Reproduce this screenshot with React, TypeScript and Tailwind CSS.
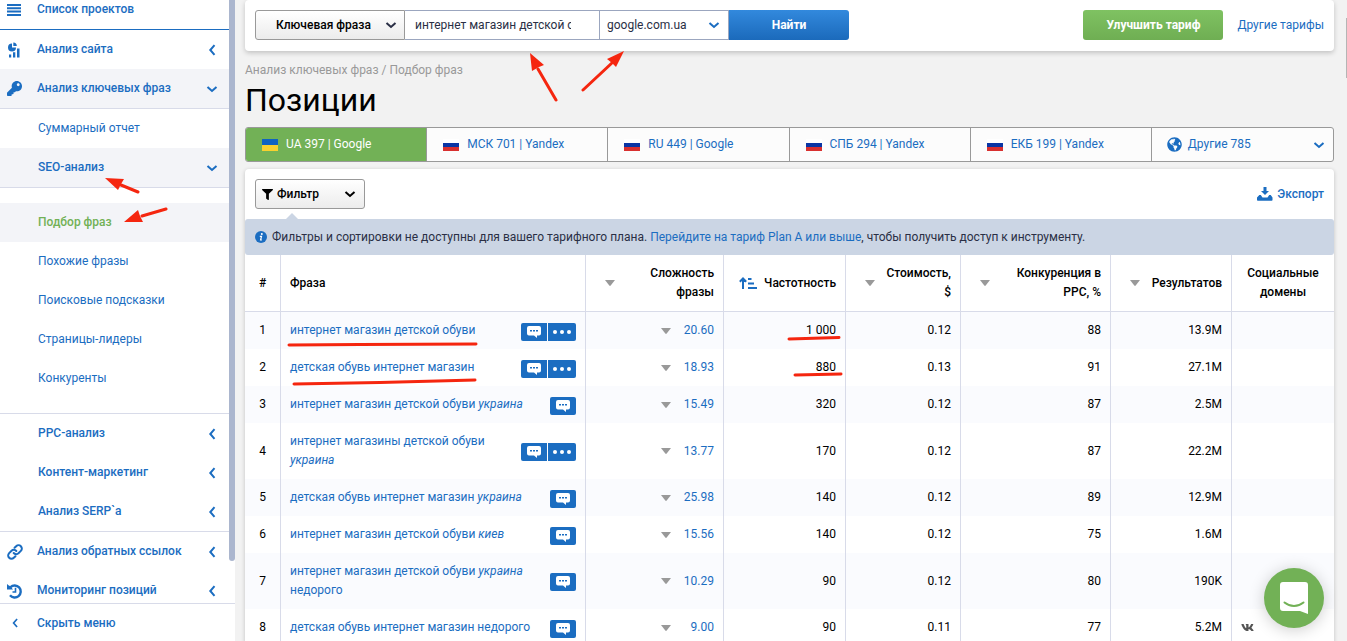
import { useState } from 'react';
import type { ReactNode } from 'react';
import clsx from 'clsx';
import { FaFilter, FaGlobeAmericas, FaKey, FaVk } from 'react-icons/fa';

type Row = {
  id: number;
  phrase: string;
  extra?: string;
  tail?: string;
  menu?: boolean;
  difficulty: string;
  volume: string;
  cost: string;
  ppc: string;
  results: string;
  vk?: boolean;
};

const rows: Row[] = [
  { id: 1, phrase: 'интернет магазин детской обуви', menu: true, difficulty: '20.60', volume: '1 000', cost: '0.12', ppc: '88', results: '13.9M' },
  { id: 2, phrase: 'детская обувь интернет магазин', menu: true, difficulty: '18.93', volume: '880', cost: '0.13', ppc: '91', results: '27.1M' },
  { id: 3, phrase: 'интернет магазин детской обуви', extra: 'украина', difficulty: '15.49', volume: '320', cost: '0.12', ppc: '87', results: '2.5M' },
  { id: 4, phrase: 'интернет магазины детской обуви', extra: 'украина', menu: true, difficulty: '13.77', volume: '170', cost: '0.12', ppc: '87', results: '22.2M' },
  { id: 5, phrase: 'детская обувь интернет магазин', extra: 'украина', difficulty: '25.98', volume: '140', cost: '0.12', ppc: '89', results: '12.9M' },
  { id: 6, phrase: 'интернет магазин детской обуви', extra: 'киев', difficulty: '15.56', volume: '140', cost: '0.12', ppc: '75', results: '1.6M' },
  { id: 7, phrase: 'интернет магазин детской обуви', extra: 'украина', tail: 'недорого', difficulty: '10.29', volume: '90', cost: '0.12', ppc: '80', results: '190K' },
  { id: 8, phrase: 'детская обувь интернет магазин недорого', difficulty: '9.00', volume: '90', cost: '0.11', ppc: '77', results: '5.2M', vk: true },
];

const tabs = [
  { label: 'UA 397 | Google', flag: 'ua' },
  { label: 'МСК 701 | Yandex', flag: 'ru' },
  { label: 'RU 449 | Google', flag: 'ru' },
  { label: 'СПБ 294 | Yandex', flag: 'ru' },
  { label: 'ЕКБ 199 | Yandex', flag: 'ru' },
];

const Chevron = ({ dir = 'down', className }: { dir?: 'down' | 'left'; className?: string }) => (
  <svg className={clsx('shrink-0', className)} width="12" height="12" viewBox="0 0 12 12" fill="none" stroke="currentColor" strokeWidth="2">
    <path d={dir === 'down' ? 'M1.500 4L6 8l4.500-4' : 'M8.500 1.200L4.300 6l4.200 4.800'} />
  </svg>
);

const Caret = () => (
  <svg className="shrink-0 text-[#999]" width="10" height="6" viewBox="0 0 10 6" fill="currentColor">
    <path d="M0 0h10L5.700 5.600a1 1 0 0 1-1.400 0z" />
  </svg>
);

const MenuIcon = () => (
  <svg width="14" height="12" viewBox="0 0 14 12" fill="currentColor">
    <path d="M0 0h14v2H0zM0 3.300h14v2H0zM0 6.600h14v2H0zM0 10h14v2H0z" />
  </svg>
);

const SiteIcon = () => (
  <svg width="14" height="16" viewBox="0 0 14 16" fill="currentColor">
    <path d="M5 1.400v4h4A4 4 0 1 1 5 1.400z" />
    <path d="M6.300 0.400A3.600 3.600 0 0 1 9.800 4H6.300z" />
    <path d="M2 12.500h2.200V15.500H2zM6 10.200h2.300v5.300H6zM10 6.500h2.500v9H10z" />
  </svg>
);

const LinkIcon = () => (
  <svg width="16" height="16" viewBox="0 0 24 24" fill="none" stroke="currentColor" strokeWidth="3" strokeLinecap="round">
    <path d="M10 13.500a5 5 0 0 0 7.200.4l3.600-3.600a4.900 4.900 0 0 0-7-7L11.300 5.700" />
    <path d="M14 10.500a5 5 0 0 0-7.200-.4l-3.600 3.600a4.900 4.900 0 0 0 7 7l2.500-2.400" />
  </svg>
);

const HistoryIcon = () => (
  <svg width="16" height="16" viewBox="0 0 16 16" fill="none" stroke="currentColor" strokeWidth="2.400">
    <path d="M3.500 4.200A6 6 0 1 1 3 12.200" />
    <path strokeWidth="1.600" d="M8.500 4.800V9H5.500" />
    <path fill="currentColor" stroke="none" d="M0 1l1.800 1.500L3.500 3.200 6 6.500H0z" />
  </svg>
);

const InfoIcon = () => (
  <svg className="shrink-0 text-[#1b6dc1]" width="12" height="12" viewBox="0 0 12 12">
    <circle cx="6" cy="6" r="6" fill="currentColor" />
    <circle cx="6.800" cy="3" r="1" fill="#fff" />
    <path d="M4.800 5.400h1.700L5.600 9h1.300" fill="none" stroke="#fff" strokeWidth="1.200" />
  </svg>
);

const DownloadIcon = () => (
  <svg width="16" height="14" viewBox="0 0 16 14" fill="currentColor">
    <path d="M6.500 0h3v4H12L8 8 4 4h2.500z" />
    <path d="M2.300 8h1.500l1.700 2.500h5L12.200 8h1.500L15.500 10.500V13a.8.8 0 0 1-.8.8H.8A.8.8 0 0 1 0 13v-2.500z" />
  </svg>
);

const SortIcon = () => (
  <svg className="shrink-0 text-[#1b6dc1]" width="18" height="12" viewBox="0 0 18 12" fill="none" stroke="currentColor" strokeWidth="2">
    <path d="M4 12V1.500M0.800 4.800L4 1.500l3.200 3.300M9 2h3.500M9 6.500h6M9 11h9" />
  </svg>
);

const ChatIcon = () => (
  <svg width="14" height="12" viewBox="0 0 14 12">
    <path fill="#fff" d="M2 0h10a2 2 0 0 1 2 2v5.500a2 2 0 0 1-2 2h-2V12L7 9.500H2a2 2 0 0 1-2-2V2a2 2 0 0 1 2-2z" />
    <path fill="#1b6dc1" d="M3 4h2v1.600H3zM6 4h2v1.600H6zM9 4h2v1.600H9z" />
  </svg>
);

const Flag = ({ code }: { code: string }) =>
  code === 'ua' ? (
    <svg width="16" height="12" viewBox="0 0 16 12">
      <rect width="16" height="12" fill="#0f63c0" />
      <rect y="6" width="16" height="6" fill="#f8d12e" />
    </svg>
  ) : (
    <svg width="16" height="12" viewBox="0 0 16 12">
      <rect width="16" height="12" fill="#fff" />
      <rect y="4" width="16" height="4" fill="#0a35a4" />
      <rect y="8" width="16" height="4" fill="#d8302f" />
    </svg>
  );

const NavItem = ({
  label,
  icon,
  arrow,
  bold,
  active,
  shaded,
}: {
  label: string;
  icon?: ReactNode;
  arrow?: 'down' | 'left';
  bold?: boolean;
  active?: boolean;
  shaded?: boolean;
}) => (
  <a
    href="#"
    className={clsx(
      'flex h-[39px] shrink-0 items-center pr-[11px]',
      bold && 'font-medium',
      active && 'text-[#72b156]',
      shaded && 'bg-[#f3f4f8]',
      icon ? 'pl-[7px]' : 'pl-[38px]'
    )}
  >
    {icon && <span className="flex w-[30px] shrink-0">{icon}</span>}
    <span className="flex-1">{label}</span>
    {arrow && <Chevron dir={arrow} />}
  </a>
);

const Sidebar = () => (
  <aside className="flex w-[235px] shrink-0 flex-col bg-white text-[#1b6dc1]">
    <div className="flex min-h-0 flex-1 overflow-hidden">
      <nav className="flex flex-1 flex-col">
        <a href="#" className="flex h-[30px] shrink-0 items-start border-b border-[#1b6dc1] pl-[7px] font-medium">
          <span className="flex w-[30px] shrink-0 pt-1">
            <MenuIcon />
          </span>
          <span>Список проектов</span>
        </a>
        <NavItem label="Анализ сайта" icon={<SiteIcon />} arrow="left" bold />
        <NavItem label="Анализ ключевых фраз" icon={<FaKey size={15} />} arrow="down" bold shaded />
        <div className="flex shrink-0 flex-col border-y border-[#d8dbe9]">
          <NavItem label="Суммарный отчет" />
          <NavItem label="SEO-анализ" arrow="down" bold shaded />
          <div className="flex flex-col border-y border-[#d8dbe9] py-[15px]">
            <NavItem label="Подбор фраз" bold active shaded />
            <NavItem label="Похожие фразы" />
            <NavItem label="Поисковые подсказки" />
            <NavItem label="Страницы-лидеры" />
            <NavItem label="Конкуренты" />
          </div>
          <NavItem label="PPC-анализ" arrow="left" bold />
          <NavItem label="Контент-маркетинг" arrow="left" bold />
          <NavItem label="Анализ SERP`a" arrow="left" bold />
        </div>
        <NavItem label="Анализ обратных ссылок" icon={<LinkIcon />} arrow="left" bold />
        <NavItem label="Мониторинг позиций" icon={<HistoryIcon />} arrow="left" bold />
      </nav>
      <div className="h-[93%] w-[6px] shrink-0 rounded-b-full bg-[#abb6ce]" />
    </div>
    <button className="flex h-[38px] shrink-0 items-center border-t border-[#d8dbe9] pt-px pl-[9px] text-left font-medium">
      <span className="w-7">
        <Chevron dir="left" className="h-[10px]" />
      </span>
      <span>Скрыть меню</span>
    </button>
  </aside>
);

const SearchBar = () => {
  const [query, setQuery] = useState('интернет магазин детской обуви');

  return (
    <header className="flex items-center rounded bg-white px-[10px] pt-[10px] pb-[11px] shadow-[0_2px_5px_rgba(0,0,0,0.2)]">
      <form className="flex" onSubmit={(e) => e.preventDefault()}>
        <div className="relative">
          <select
            aria-label="Тип запроса"
            className="h-[30px] w-[150px] appearance-none rounded-l-[3px] border border-[#999] bg-linear-to-b from-white to-[#ececec] pl-5 font-medium text-black"
          >
            <option>Ключевая фраза</option>
          </select>
          <Chevron className="pointer-events-none absolute top-[9px] right-2" />
        </div>
        <input
          aria-label="Запрос"
          value={query}
          onChange={(e) => setQuery(e.target.value)}
          className="h-[30px] w-[194px] border-y border-[#9ba6bf] bg-white pr-7 pl-[10px]"
        />
        <div className="relative">
          <select
            aria-label="Поисковая система"
            className="h-[30px] w-[130px] appearance-none border border-[#9ba6bf] bg-white pl-[7px]"
          >
            <option>google.com.ua</option>
          </select>
          <Chevron className="pointer-events-none absolute top-[9px] right-[9px] text-[#1b6dc1]" />
        </div>
        <button type="submit" className="h-[30px] w-[120px] rounded-r-[3px] bg-linear-to-b from-[#3289dd] to-[#1b6abb] font-bold text-white">
          Найти
        </button>
      </form>
      <button className="ml-auto h-[30px] w-[140px] rounded-[3px] bg-linear-to-b from-[#7fc262] to-[#6fae53] font-bold text-white">
        Улучшить тариф
      </button>
      <a href="#" className="ml-[14px] text-[#1b6dc1]">
        Другие тарифы
      </a>
    </header>
  );
};

const RegionTabs = () => (
  <div className="grid h-[35px] grid-cols-6 divide-x divide-[#999] overflow-hidden rounded-[3px] border border-[#999] bg-[#fcfcfc] text-[#1b6dc1]">
    {tabs.map((tab, i) => (
      <button
        key={tab.label}
        className={clsx('flex items-center gap-2 pl-4 text-left', i === 0 && 'bg-[#72b156] text-white')}
      >
        <Flag code={tab.flag} />
        <span>{tab.label}</span>
      </button>
    ))}
    <button className="flex items-center gap-[6px] pr-2 pl-[15px] text-left">
      <FaGlobeAmericas size={15} />
      <span className="flex-1">Другие 785</span>
      <Chevron />
    </button>
  </div>
);

const SortHeader = ({ children, sorted }: { children: ReactNode; sorted?: boolean }) => (
  <th className="border-r border-b border-[#d8dbe9] p-0 font-medium">
    <div className={clsx('flex items-center justify-between pr-[9px] text-right', sorted ? 'pl-[15px]' : 'pl-[19px]')}>
      {sorted ? <SortIcon /> : <Caret />}
      <span>{children}</span>
    </div>
  </th>
);

const PhraseTable = () => (
  <table className="w-full table-fixed border-separate border-spacing-0 text-black">
    <colgroup>
      <col className="w-9" />
      <col />
      <col className="w-[138px]" />
      <col className="w-[122px]" />
      <col className="w-[115px]" />
      <col className="w-[150px]" />
      <col className="w-[121px]" />
      <col className="w-[102px]" />
    </colgroup>
    <thead>
      <tr className="h-[57px]">
        <th className="border-r border-b border-[#d8dbe9] font-medium">#</th>
        <th className="border-r border-b border-[#d8dbe9] px-[9px] text-left font-medium">Фраза</th>
        <SortHeader>
          Сложность
          <br />
          фразы
        </SortHeader>
        <SortHeader sorted>Частотность</SortHeader>
        <SortHeader>
          Стоимость,
          <br />$
        </SortHeader>
        <SortHeader>
          Конкуренция в
          <br />
          PPC, %
        </SortHeader>
        <SortHeader>Результатов</SortHeader>
        <th className="border-b border-[#d8dbe9] p-0 font-medium">
          Социальные
          <br />
          домены
        </th>
      </tr>
    </thead>
    <tbody>
      {rows.map((row) => (
        <tr key={row.id} className="odd:bg-[#fafbfe]">
          <td className="border-r border-[#d8dbe9] py-[9px] text-center">{row.id}</td>
          <td className="border-r border-[#d8dbe9] p-[9px]">
            <div className="flex items-center justify-between gap-[10px]">
              <a href="#" className="flex-1 text-[#1b6dc1]">
                {row.phrase} {row.extra && <i>{row.extra}</i>} {row.tail}
              </a>
              <span className="-my-1 flex shrink-0 gap-px pt-[2px]">
                <button
                  aria-label="Подсказки"
                  className={clsx(
                    'flex h-[18px] w-[26px] items-center justify-center bg-[#1b6dc1]',
                    row.menu ? 'rounded-l-[2px]' : 'rounded-[2px]'
                  )}
                >
                  <ChatIcon />
                </button>
                {row.menu && (
                  <button
                    aria-label="Ещё"
                    className="flex h-[18px] w-7 items-center justify-center gap-[3px] rounded-r-[2px] bg-[#1b6dc1]"
                  >
                    <span className="size-1 rounded-full bg-white" />
                    <span className="size-1 rounded-full bg-white" />
                    <span className="size-1 rounded-full bg-white" />
                  </button>
                )}
              </span>
            </div>
          </td>
          <td className="border-r border-[#d8dbe9] py-[9px] pr-[9px]">
            <div className="flex items-center justify-end gap-[11px]">
              <Caret />
              <a href="#" className="w-8 text-right text-[#1b6dc1]">
                {row.difficulty}
              </a>
            </div>
          </td>
          <td className="border-r border-[#d8dbe9] py-[9px] pr-[9px] text-right">{row.volume}</td>
          <td className="border-r border-[#d8dbe9] py-[9px] pr-[9px] text-right">{row.cost}</td>
          <td className="border-r border-[#d8dbe9] py-[9px] pr-[9px] text-right">{row.ppc}</td>
          <td className="border-r border-[#d8dbe9] py-[9px] pr-[9px] text-right">{row.results}</td>
          <td className="py-[9px] pl-[9px]">{row.vk && <FaVk size={13} className="text-[#555]" />}</td>
        </tr>
      ))}
    </tbody>
  </table>
);

// Hand-drawn marks over the page
const Marks = () => (
  <svg
    className="pointer-events-none absolute top-0 left-0"
    width="860"
    height="400"
    viewBox="0 0 860 400"
    fill="none"
    stroke="#f5260f"
    strokeWidth="3"
    strokeLinecap="round"
  >
    <path d="M556 100L538 69M583 90L613 62M138 192L121 185M166 209L142 216" />
    <g fill="#f5260f" stroke="none">
      <path d="M530 53l14 12-5 2-7 4z" />
      <path d="M624 51l-8 16-4-4-5-4z" />
      <path d="M105 178l19 1-3 5-3 6z" />
      <path d="M124 222l14-12 2 6 3 6z" />
    </g>
    <path d="M289 345L360 344.500L476 344M294 384L380 382.500L475 380M789 339L839 337.500M795 375L841 374" />
  </svg>
);

const App = () => (
  <div className="relative flex h-screen overflow-hidden bg-[#f2f2f2] font-['Roboto',sans-serif] text-[12px] leading-[19px] text-[#2a2f45]">
    <Sidebar />

    <main className="min-w-0 flex-1 overflow-hidden pr-[13px] pl-[10px]">
      <SearchBar />
      <div className="pt-[10px] text-[#999]">
        <a href="#">Анализ ключевых фраз</a> / <span>Подбор фраз</span>
      </div>
      <h1 className="pt-[2px] pb-[9px] text-[32px] leading-9 text-black">Позиции</h1>
      <RegionTabs />

      <section className="mt-[7px] rounded bg-white shadow-[0_1px_4px_rgba(0,0,0,0.2)]">
        <div className="flex items-center justify-between p-[10px]">
          <button className="flex h-[30px] w-[110px] items-center gap-1 rounded-[3px] border border-[#999] bg-linear-to-b from-white to-[#ececec] pr-2 pl-[6px] font-medium text-black">
            <FaFilter size={11} />
            <span className="flex-1 text-left">Фильтр</span>
            <Chevron />
          </button>
          <a href="#" className="flex items-center gap-1 font-medium text-[#1b6dc1]">
            <DownloadIcon />
            <span>Экспорт</span>
          </a>
        </div>
        <div className="relative flex h-9 items-center gap-[5px] rounded-[3px] bg-[#cbd5e4] px-[10px]">
          <svg className="absolute -top-[6px] left-10" width="14" height="7" viewBox="0 0 14 7">
            <path fill="#cbd5e4" d="M0 7l7-7 7 7z" />
          </svg>
          <InfoIcon />
          <p>
            Фильтры и сортировки не доступны для вашего тарифного плана.{' '}
            <a href="#" className="text-[#1b6dc1]">
              Перейдите на тариф Plan A или выше
            </a>
            , чтобы получить доступ к инструменту.
          </p>
        </div>
        <PhraseTable />
      </section>
    </main>

    <div className="absolute top-[18px] right-0 h-[60px] w-px bg-[#b5b5b5]" />

    <button
      aria-label="Чат"
      className="absolute right-[23px] bottom-[13px] flex size-[60px] items-center justify-center rounded-full bg-[#72b156] shadow-[0_2px_16px_rgba(0,0,0,0.2)]"
    >
      <svg width="28" height="32" viewBox="0 0 28 32">
        <path fill="#fff" d="M3 0h22a3 3 0 0 1 3 3v29l-8-3H3a3 3 0 0 1-3-3V3a3 3 0 0 1 3-3z" />
        <path fill="none" stroke="#72b156" strokeWidth="2" strokeLinecap="round" d="M4.500 20.500c5.500 4.500 13.500 4.500 19 0" />
      </svg>
    </button>

    <Marks />
  </div>
);

export default App;
